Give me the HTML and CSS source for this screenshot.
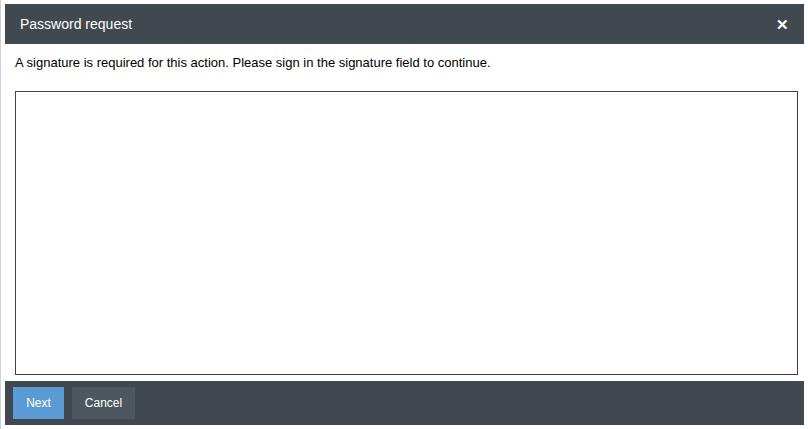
FILE: index.html
```html
<!DOCTYPE html>
<html>
<head>
<meta charset="utf-8">
<link rel="stylesheet" href="styles.css">
</head>
<body>
<div class="dialog">
  <div class="header">
    <span class="title">Password request</span>
    <span class="close">&#x2715;</span>
  </div>
  <div class="content">
    <p class="msg">A signature is required for this action. Please sign in the signature field to continue.</p>
    <div class="pad"></div>
  </div>
  <div class="footer">
    <button class="btn primary">Next</button>
    <button class="btn secondary">Cancel</button>
  </div>
</div>
</body>
</html>
```
FILE: styles.css
```css
html, body { margin: 0; padding: 0; background: #fff; }
body {
  font-family: "Liberation Sans", Arial, sans-serif;
  padding: 4px 4px 4px 5px;
  width: 808px; height: 429px; box-sizing: border-box;
  border-left: 1px solid #d0d0d0;
}
.dialog {
  width: 799px;
  height: 421px;
  display: flex;
  flex-direction: column;
  background: #fff;
  margin-left: -1px;
}
.header {
  height: 40px;
  background: #41484f;
  display: flex;
  align-items: center;
  justify-content: space-between;
  padding: 0 15px 0 15px;
  flex: none;
}
.title { color: #fff; font-size: 14px; }
.close { color: #fff; font-size: 15px; font-weight: bold; margin-top: 1px; }
.content {
  flex: 1;
  padding: 0 6px 0 10px;
  display: flex;
  flex-direction: column;
}
.msg {
  margin: 11px 0 0 0;
  font-size: 13px;
  color: #000;
  line-height: 15px;
}
.pad {
  margin-top: 21px;
  height: 282px;
  border: 1px solid #3d4247;
}
.footer {
  height: 44px;
  background: #41484f;
  flex: none;
  display: flex;
  align-items: center;
  padding: 0 8px;
  gap: 8px;
}
.btn {
  border: none;
  height: 32px;
  font-family: "Liberation Sans", Arial, sans-serif;
  font-size: 12px;
  color: #fff;
  padding: 0;
}
.primary { background: #5b9bd5; width: 51px; }
.secondary { background: #4c575e; width: 63px; }
```
